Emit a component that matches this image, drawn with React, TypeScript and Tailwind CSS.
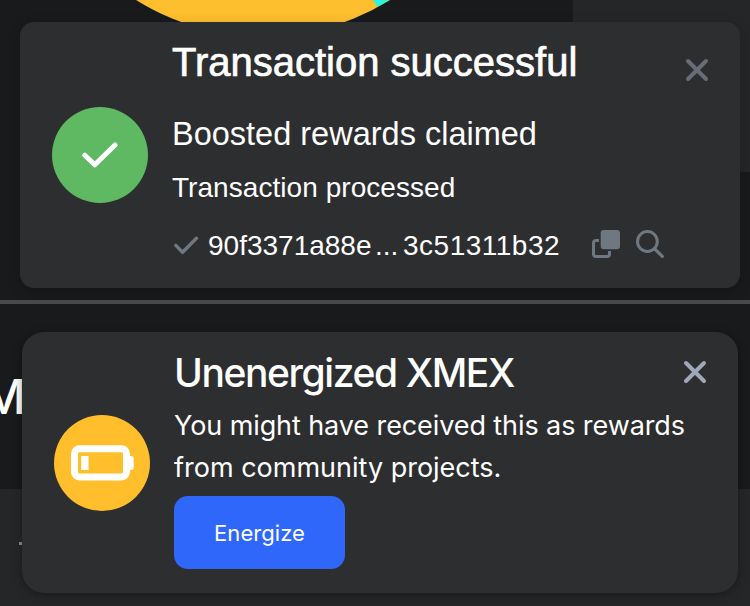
import type { ReactNode } from "react";

function Close({ className }: { className: string }) {
  return (
    <button aria-label="Close" className={`block size-6 shrink-0 ${className}`}>
      <svg viewBox="0 0 24 24" className="block size-6" fill="none" stroke="currentColor" strokeWidth="4" strokeLinecap="round">
        <path d="M3 3 21 21M21 3 3 21" />
      </svg>
    </button>
  );
}

function Badge({ className, children }: { className: string; children: ReactNode }) {
  return <div className={`flex size-24 shrink-0 items-center justify-center rounded-full ${className}`}>{children}</div>;
}

function TransactionToast() {
  return (
    <div className="relative flex h-[266px] w-[720px] items-center rounded-[14px] bg-[#2d2e2f] pl-8 shadow-[0_4px_14px_rgba(0,0,0,0.2)]">
      <Badge className="bg-[#5fb862]">
        <svg viewBox="0 0 36 26" className="h-[26px] w-9" fill="none" stroke="#fff" strokeWidth="5" strokeLinecap="round" strokeLinejoin="round">
          <path d="M2.8 13.2 12.8 22.8 33 3" />
        </svg>
      </Badge>
      <div className="ml-6 flex h-full flex-1 flex-col text-white">
        <h2 className="mt-[17px] text-[40px] leading-[46px] font-normal whitespace-nowrap [-webkit-text-stroke:0.7px_white]">Transaction successful</h2>
        <p className="mt-[30px] text-[32.5px] leading-[38px] whitespace-nowrap">Boosted rewards claimed</p>
        <p className="mt-[19px] text-[28px] leading-8 tracking-[0.05px] whitespace-nowrap">Transaction processed</p>
        <div className="mt-[25px] flex h-8 items-center pl-0.5 text-[#6f7880]">
          <svg viewBox="0 0 26 20" className="h-5 w-[26px] shrink-0" fill="none" stroke="currentColor" strokeWidth="3.4" strokeLinecap="round" strokeLinejoin="round">
            <path d="M1.8 10.4 8.6 17.2 22.4 3.2" />
          </svg>
          <span className="ml-2 flex pt-0.5 text-[28px] leading-8 text-white">
            <span className="w-[167px]">90f3371a88e</span>
            <span className="w-7">...</span>
            <span className="w-[157px] tracking-[0.5px]">3c51311b32</span>
          </span>
          <svg viewBox="0 0 28 28" className="mb-0.5 ml-8 size-7 shrink-0" fill="none">
            <rect x="8.7" y="0" width="19.3" height="19.3" rx="3.2" fill="currentColor" />
            <path d="M7 10.5H4Q1.5 10.5 1.5 13V24Q1.5 26.5 4 26.5H15Q17.5 26.5 17.5 24V21" stroke="currentColor" strokeWidth="3" />
          </svg>
          <svg viewBox="0 0 28 28" className="mb-0.5 ml-4 size-7 shrink-0" fill="none" stroke="currentColor" strokeWidth="3" strokeLinecap="round">
            <circle cx="11.4" cy="11.5" r="9.9" />
            <path d="M18.7 18.8 26.3 26.4" strokeWidth="3.3" />
          </svg>
        </div>
      </div>
      <div className="mt-9 mr-[31px] self-start">
        <Close className="text-[#686c75]" />
      </div>
    </div>
  );
}

function EnergizeToast() {
  return (
    <div className="relative flex h-[261px] w-[716px] items-center rounded-[22px] bg-[#2d2e2f] pl-8 shadow-[0_2px_10px_rgba(0,0,0,0.35)]">
      <Badge className="bg-[#ffbf2d]">
        <svg viewBox="0 0 64 36" className="h-9 w-16" fill="none">
          <rect x="4.5" y="3.7" width="52" height="28.4" rx="5" stroke="#fff" strokeWidth="7" />
          <rect x="56.5" y="11" width="7.2" height="14" rx="2.5" fill="#fff" />
          <rect x="11.2" y="11" width="7.3" height="14" fill="#fff" />
        </svg>
      </Badge>
      <div className="ml-6 flex h-full flex-1 flex-col items-start font-['Inter',sans-serif] text-white">
        <div className="flex w-full items-start justify-between">
          <h2 className="mt-[17px] text-[39px] leading-[48px] font-medium tracking-[-1.4px] whitespace-nowrap">Unenergized XMEX</h2>
          <div className="mt-7 mr-[31px]">
            <Close className="text-[#9fa7b8]" />
          </div>
        </div>
        <p className="mt-2 text-[27px] leading-[42px] tracking-[-0.09px] whitespace-nowrap">
          You might have received this as rewards
          <br />
          <span className="tracking-[0px]">from community projects.</span>
        </p>
        <button className="mt-[7px] h-[73px] w-[171px] rounded-[14px] bg-[#2f67fb] pt-0.5 text-[22px] tracking-[0.05px]">Energize</button>
      </div>
    </div>
  );
}

export default function App() {
  return (
    <div className="flex h-[606px] w-[750px] flex-col overflow-hidden bg-[#191a1b] font-['Liberation_Sans',Arial,sans-serif]">
      <section className="relative h-[300px] pt-[22px] pl-5">
        <div className="absolute top-0 right-0 h-[172px] w-[177px] bg-[#252628]" />
        <svg viewBox="0 0 750 40" className="absolute top-0 left-0 h-10 w-[750px]">
          <circle cx="263" cy="-202.5" r="239" fill="#fdbf2d" />
          <path d="M373.2 0 377.3 6.9A239 239 0 0 0 389.6 0Z" fill="#29f5dc" />
        </svg>
        <TransactionToast />
      </section>
      <div className="h-1 shrink-0 bg-[#4a4a4c]" />
      <section className="relative h-[302px] pt-7 pl-[22px]">
        <div className="absolute top-[185px] left-0 h-[117px] w-full bg-[#252628]" />
        <span className="absolute top-[64px] left-[-18px] font-['Inter',sans-serif] text-[48px] leading-[58px] font-medium text-white">M</span>
        <div className="absolute top-[238px] left-[19px] h-[3px] w-2 bg-[#8b8f96]" />
        <EnergizeToast />
      </section>
    </div>
  );
}
